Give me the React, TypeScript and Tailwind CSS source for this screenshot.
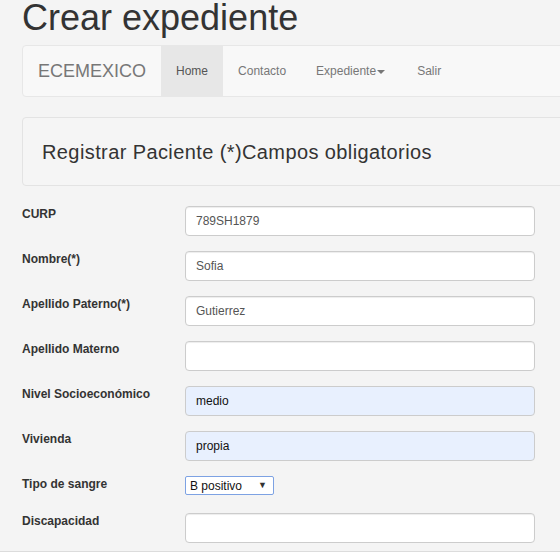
import { FC } from "react";

interface FieldProps {
  label: string;
  value?: string;
  autofill?: boolean;
  className?: string;
}

const Field: FC<FieldProps> = ({ label, value = "", autofill = false, className = "" }) => {
  return (
    <div className={`flex items-start ${className}`}>
      <label className="w-[163px] shrink-0 text-[12px] leading-[17px] font-bold text-[#333]">
        {label}
      </label>
      <input
        readOnly
        value={value}
        className={
          autofill
            ? "w-[350px] h-[30px] rounded-[4px] border border-[#ccc] bg-[#e8f0fe] px-[10px] text-[12px] text-[#111] outline-none"
            : "w-[350px] h-[30px] rounded-[4px] border border-[#ccc] bg-white px-[10px] text-[12px] text-[#555] shadow-[inset_0_1px_1px_rgba(0,0,0,0.075)] outline-none"
        }
      />
    </div>
  );
};

const App: FC = () => {
  return (
    <div className="w-full min-h-[560px] overflow-hidden bg-white font-['Liberation_Sans',Arial,sans-serif]">
      <div className="bg-[#f4f4f4] border-b border-[#dcdcdc] pl-[22px] pb-[8px]">
        <div className="w-[1140px]">
          <h1 className="text-[36px] leading-[36px] text-[#333] font-normal">Crear expediente</h1>

          {/* navbar */}
          <nav className="mt-[9px] h-[52px] flex items-stretch bg-[#f8f8f8] border border-[#e7e7e7] rounded-[4px]">
            <span className="flex items-center px-[15px] text-[18px] text-[#777]">ECEMEXICO</span>
            <a className="flex items-center px-[15px] text-[12px] text-[#555] bg-[#e7e7e7]">Home</a>
            <a className="flex items-center px-[15px] text-[12px] text-[#777]">Contacto</a>
            <a className="flex items-center px-[15px] text-[12px] text-[#777]">
              Expediente
              <span className="ml-[1px] mt-[2px] w-0 h-0 border-l-[4px] border-r-[4px] border-t-[4px] border-l-transparent border-r-transparent border-t-[#777]"></span>
            </a>
            <a className="flex items-center pl-[17px] pr-[15px] text-[12px] text-[#777]">Salir</a>
          </nav>

          <div className="mt-[20px] bg-[#f5f5f5] border border-[#e3e3e3] rounded-[4px] pt-[23px] pb-[22px] pl-[19px]">
            <h3 className="text-[20px] leading-[22px] tracking-[0.4px] text-[#333] font-normal">
              Registrar Paciente (*)Campos obligatorios
            </h3>
          </div>

          <form className="mt-[20px] flex flex-col">
            <Field label="CURP" value="789SH1879" />
            <Field label="Nombre(*)" value="Sofia" className="mt-[15px]" />
            <Field label="Apellido Paterno(*)" value="Gutierrez" className="mt-[15px]" />
            <Field label="Apellido Materno" className="mt-[15px]" />
            <Field label="Nivel Socioeconómico" value="medio" autofill className="mt-[15px]" />
            <Field label="Vivienda" value="propia" autofill className="mt-[15px]" />
            <div className="mt-[15px] flex items-start">
              <label className="w-[163px] shrink-0 text-[12px] leading-[17px] font-bold text-[#333]">
                Tipo de sangre
              </label>
              <div className="w-[89px] h-[19px] flex items-center justify-between border border-[#7da2e3] rounded-[2px] bg-white pl-[4px] pr-[6px] text-[12px] text-[#111]">
                <span>B positivo</span>
                <span className="text-[9px] text-[#333]">▼</span>
              </div>
            </div>
            <Field label="Discapacidad" className="mt-[18px]" />
          </form>
        </div>
      </div>
    </div>
  );
};

export default App;
